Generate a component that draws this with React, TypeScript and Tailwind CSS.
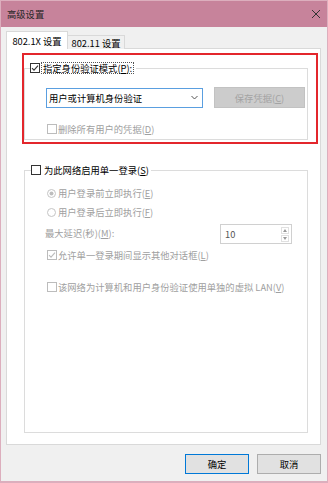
import React from 'react';

const font = { fontFamily: '"Noto Sans CJK SC", "Noto Sans", sans-serif' };

function Check({ checked, disabled }: { checked?: boolean; disabled?: boolean }) {
  const c = disabled ? '#bcbcbc' : '#333333';
  return (
    <svg width="10" height="10" viewBox="0 0 10 10" className="shrink-0">
      <rect x="0.5" y="0.5" width="9" height="9" fill="white" stroke={c} />
      {checked && (
        <path d="M2 5.2 L4 7.2 L8 2.6" fill="none" stroke={c} strokeWidth="1.1" />
      )}
    </svg>
  );
}

function Radio({ checked }: { checked?: boolean }) {
  return (
    <svg width="9" height="9" viewBox="0 0 9 9" className="shrink-0">
      <circle cx="4.5" cy="4.5" r="4" fill="white" stroke="#c4c4c4" />
      {checked && <circle cx="4.5" cy="4.5" r="2" fill="#bdbdbd" />}
    </svg>
  );
}

export default function App() {
  return (
    <div
      style={font}
      className="w-[328px] h-[483px] bg-[#f0f0f0] border border-b-2 border-[#dcaebd] flex flex-col text-[9.3px] leading-[12px] text-black overflow-hidden"
    >
      {/* Title bar */}
      <div className="h-[26px] bg-[#c7839b] flex items-center justify-between pl-[6px] pr-[6px]">
        <span className="text-[#262626]">高级设置</span>
        <svg width="10" height="10" viewBox="0 0 10 10">
          <path d="M1 1 L9 9 M9 1 L1 9" stroke="#333" strokeWidth="1" />
        </svg>
      </div>

      <div className="flex-1 flex flex-col pl-[5px] pr-[6px] pt-[4px]">
        {/* Tabs */}
        <div className="flex items-end h-[18px] -mb-px relative z-10">
          <div className="w-[62px] h-[18px] bg-white border border-b-0 border-[#d9d9d9] flex items-center justify-center pt-px">
            802.1X 设置
          </div>
          <div className="w-[57px] h-[14px] bg-[#f0f0f0] border border-l-0 border-b-0 border-[#d9d9d9] flex items-center justify-center">
            802.11 设置
          </div>
        </div>

        {/* Panel */}
        <div className="h-[397px] bg-white border border-[#d9d9d9] flex flex-col">
          {/* Highlighted group */}
          <div className="mt-[4px] ml-[15px] w-[296px] border-2 border-[#e3262c] pb-[2px]">
            <fieldset className="mt-[7px] mr-[8px] border border-[#dcdcdc] h-[78px]">
              <legend className="ml-[5px] pr-[2px] flex items-center gap-px h-[12px]">
                <Check checked />
                <span className="border border-dotted border-[#555] px-px leading-[10px]">
                  指定身份验证模式(<span className="underline">P</span>):
                </span>
              </legend>
              <div className="mt-[13px] ml-[21px] flex items-center gap-[11px]">
                <div className="w-[157px] h-[20px] border border-[#5a9fe0] bg-white flex items-center justify-between pl-[2px] pr-[4px]">
                  <span>用户或计算机身份验证</span>
                  <svg width="7" height="5" viewBox="0 0 7 5">
                    <path d="M0.5 1 L3.5 4 L6.5 1" fill="none" stroke="#555" strokeWidth="1" />
                  </svg>
                </div>
                <div className="w-[91px] h-[21px] bg-[#cccccc] border border-[#c2c2c2] flex items-center justify-center text-[#a3a3a3]">
                  保存凭据(<span className="underline">C</span>)
                </div>
              </div>
              <div className="mt-[15px] ml-[22px] flex items-center gap-px text-[#a0a0a0]">
                <Check disabled />
                <span>删除所有用户的凭据(<span className="underline">D</span>)</span>
              </div>
            </fieldset>
          </div>

          {/* Single sign on group */}
          <fieldset className="mt-[20px] ml-[17px] w-[284px] h-[269px] border border-[#dcdcdc]">
            <legend className="ml-[6px] pr-[2px] flex items-center gap-[3px] h-[12px]">
              <Check />
              <span>为此网络启用单一登录(<span className="underline">S</span>)</span>
            </legend>
            <div className="text-[#a0a0a0]">
              <div className="mt-[11px] ml-[22px] flex items-center gap-[2px]">
                <Radio checked />
                <span>用户登录前立即执行(<span className="underline">E</span>)</span>
              </div>
              <div className="mt-[7px] ml-[22px] flex items-center gap-[2px]">
                <Radio />
                <span>用户登录后立即执行(<span className="underline">F</span>)</span>
              </div>
              <div className="mt-[6px] ml-[20px] mr-[15px] h-[20px] flex items-center justify-between">
                <span className="-mt-[3px]">最大延迟(秒)(<span className="underline">M</span>):</span>
                <div className="w-[72px] h-[20px] border border-[#d0d0d0] bg-white flex items-center justify-between pl-[4px] pr-[2px]">
                  <span className="text-[#555]">10</span>
                  <div className="flex flex-col gap-px">
                    <div className="w-[8px] h-[7px] border border-[#e0e0e0] flex items-center justify-center">
                      <svg width="4" height="3" viewBox="0 0 4 3"><path d="M0 3 L2 0 L4 3 Z" fill="#999" /></svg>
                    </div>
                    <div className="w-[8px] h-[7px] border border-[#e0e0e0] flex items-center justify-center">
                      <svg width="4" height="3" viewBox="0 0 4 3"><path d="M0 0 L2 3 L4 0 Z" fill="#999" /></svg>
                    </div>
                  </div>
                </div>
              </div>
              <div className="mt-[5px] ml-[22px] flex items-center gap-px">
                <Check checked disabled />
                <span>允许单一登录期间显示其他对话框(<span className="underline">L</span>)</span>
              </div>
              <div className="mt-[20px] ml-[22px] flex items-center gap-px">
                <Check disabled />
                <span>该网络为计算机和用户身份验证使用单独的虚拟 LAN(<span className="underline">V</span>)</span>
              </div>
            </div>
          </fieldset>
        </div>

        {/* Buttons */}
        <div className="mt-[9px] flex justify-end gap-[8px]">
          <button className="w-[64px] h-[20px] bg-[#e1e1e1] border border-[#0078d7] flex items-center justify-center">
            确定
          </button>
          <button className="w-[64px] h-[20px] bg-[#e1e1e1] border border-[#adadad] flex items-center justify-center">
            取消
          </button>
        </div>
      </div>
    </div>
  );
}
